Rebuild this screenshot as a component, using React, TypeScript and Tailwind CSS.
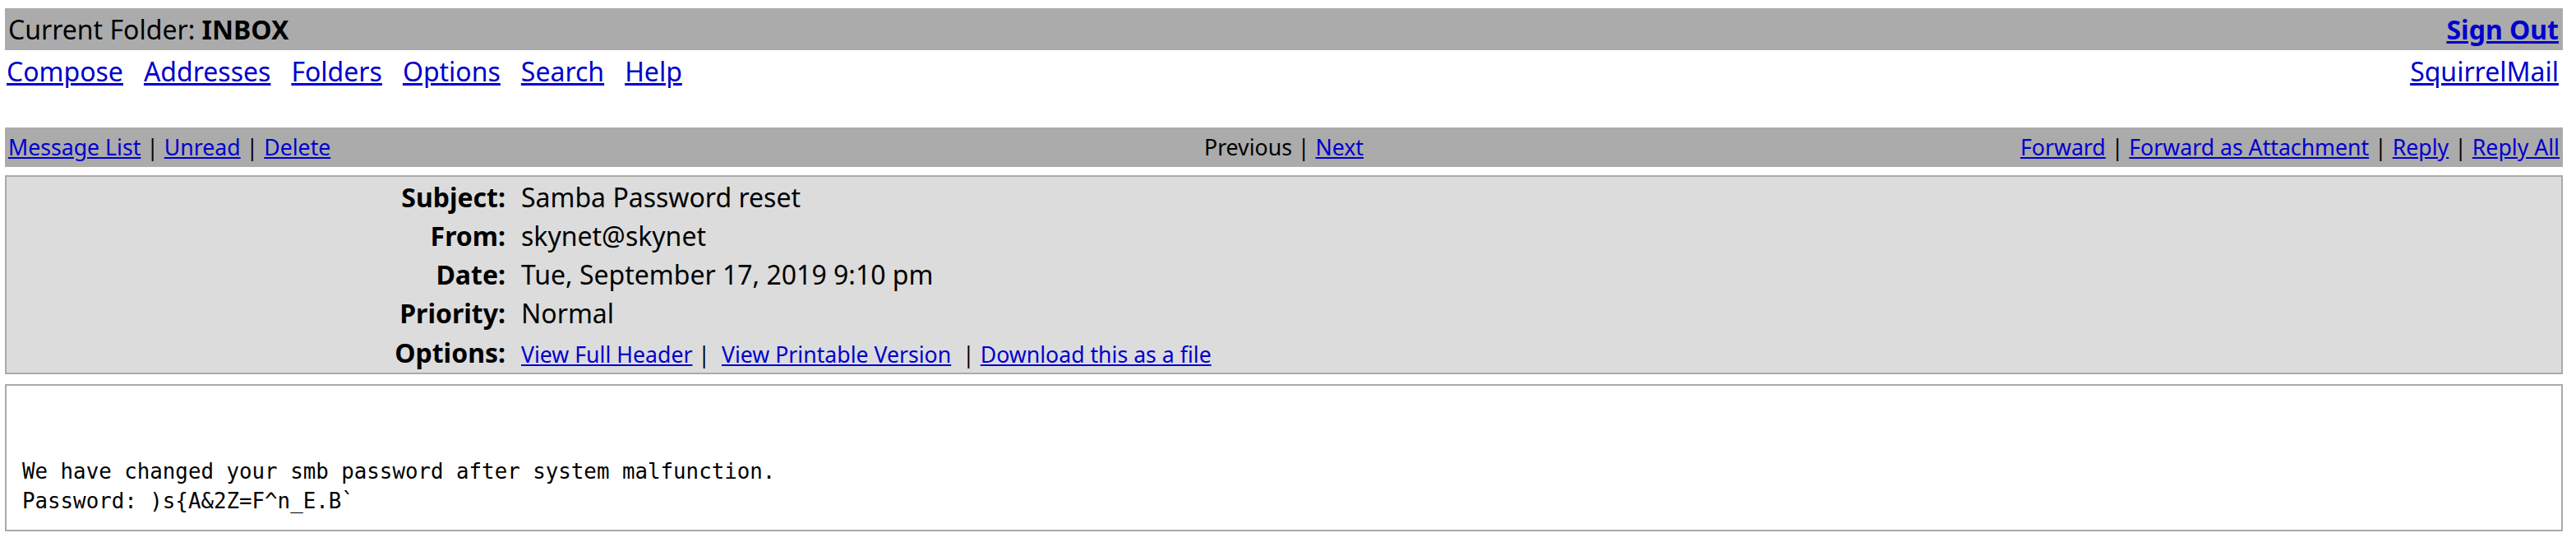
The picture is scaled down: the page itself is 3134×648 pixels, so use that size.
const link = 'text-[#0000cc] underline'

function Sep() {
  return <span className="text-black"> | </span>
}

const headers: [string, string][] = [
  ['Subject:', 'Samba Password reset'],
  ['From:', 'skynet@skynet'],
  ['Date:', 'Tue, September 17, 2019 9:10 pm'],
  ['Priority:', 'Normal'],
]

export default function App() {
  return (
    <div className="bg-white min-h-[648px] pt-[10px] pl-[6px] pr-[16px] text-black font-['Noto_Sans',sans-serif] text-[32px]">
      {/* top bar */}
      <div className="h-[51px] bg-[#ababab] flex items-center justify-between pl-[4px] pr-[5px]">
        <span>
          Current Folder: <b>INBOX</b>
        </span>
        <a href="#" className={`${link} font-bold`}>
          Sign Out
        </a>
      </div>

      {/* main menu */}
      <div className="h-[94px] pt-[2px] flex justify-between pl-[2px] pr-[5px]">
        <div className="flex gap-[25px] h-fit">
          {['Compose', 'Addresses', 'Folders', 'Options', 'Search', 'Help'].map((l) => (
            <a key={l} href="#" className={link}>
              {l}
            </a>
          ))}
        </div>
        <a href="#" className={`${link} h-fit`}>
          SquirrelMail
        </a>
      </div>

      {/* message nav bar */}
      <div className="h-[48px] bg-[#ababab] grid grid-cols-3 items-center px-[4px] text-[26.67px] whitespace-pre">
        <div>
          <a href="#" className={link}>Message List</a>
          <Sep />
          <a href="#" className={link}>Unread</a>
          <Sep />
          <a href="#" className={link}>Delete</a>
        </div>
        <div className="text-center">
          Previous
          <Sep />
          <a href="#" className={link}>Next</a>
        </div>
        <div className="text-right">
          <a href="#" className={link}>Forward</a>
          <Sep />
          <a href="#" className={link}>Forward as Attachment</a>
          <Sep />
          <a href="#" className={link}>Reply</a>
          <Sep />
          <a href="#" className={link}>Reply All</a>
        </div>
      </div>

      {/* headers */}
      <div className="mt-[10px] border-2 border-[#aaaaaa] bg-[#dcdcdc] pt-[1px] pb-[2px]">
        {headers.map(([k, v]) => (
          <div key={k} className="h-[47px] flex items-center">
            <div className="w-[607px] text-right font-bold">{k}</div>
            <div className="pl-[19px]">{v}</div>
          </div>
        ))}
        <div className="h-[47px] flex items-baseline pt-[1px]">
          <div className="w-[607px] text-right font-bold">Options:</div>
          <div className="pl-[19px] text-[26.67px] whitespace-pre">
            <a href="#" className={link}>View Full Header</a>
            <span> |  </span>
            <a href="#" className={link}>View Printable Version</a>
            <span>  |</span>
            <span> </span>
            <a href="#" className={link}>Download this as a file</a>
          </div>
        </div>
      </div>

      {/* body */}
      <div className="mt-[12px] h-[179px] border-2 border-[#aaaaaa] bg-white pt-[14px] pl-[19px]">
        <pre className="font-['DejaVu_Sans_Mono',monospace] text-[25.8px] leading-[36px]">
          {'\n\nWe have changed your smb password after system malfunction.\nPassword: )s{A&2Z=F^n_E.B`'}
        </pre>
      </div>
    </div>
  )
}
